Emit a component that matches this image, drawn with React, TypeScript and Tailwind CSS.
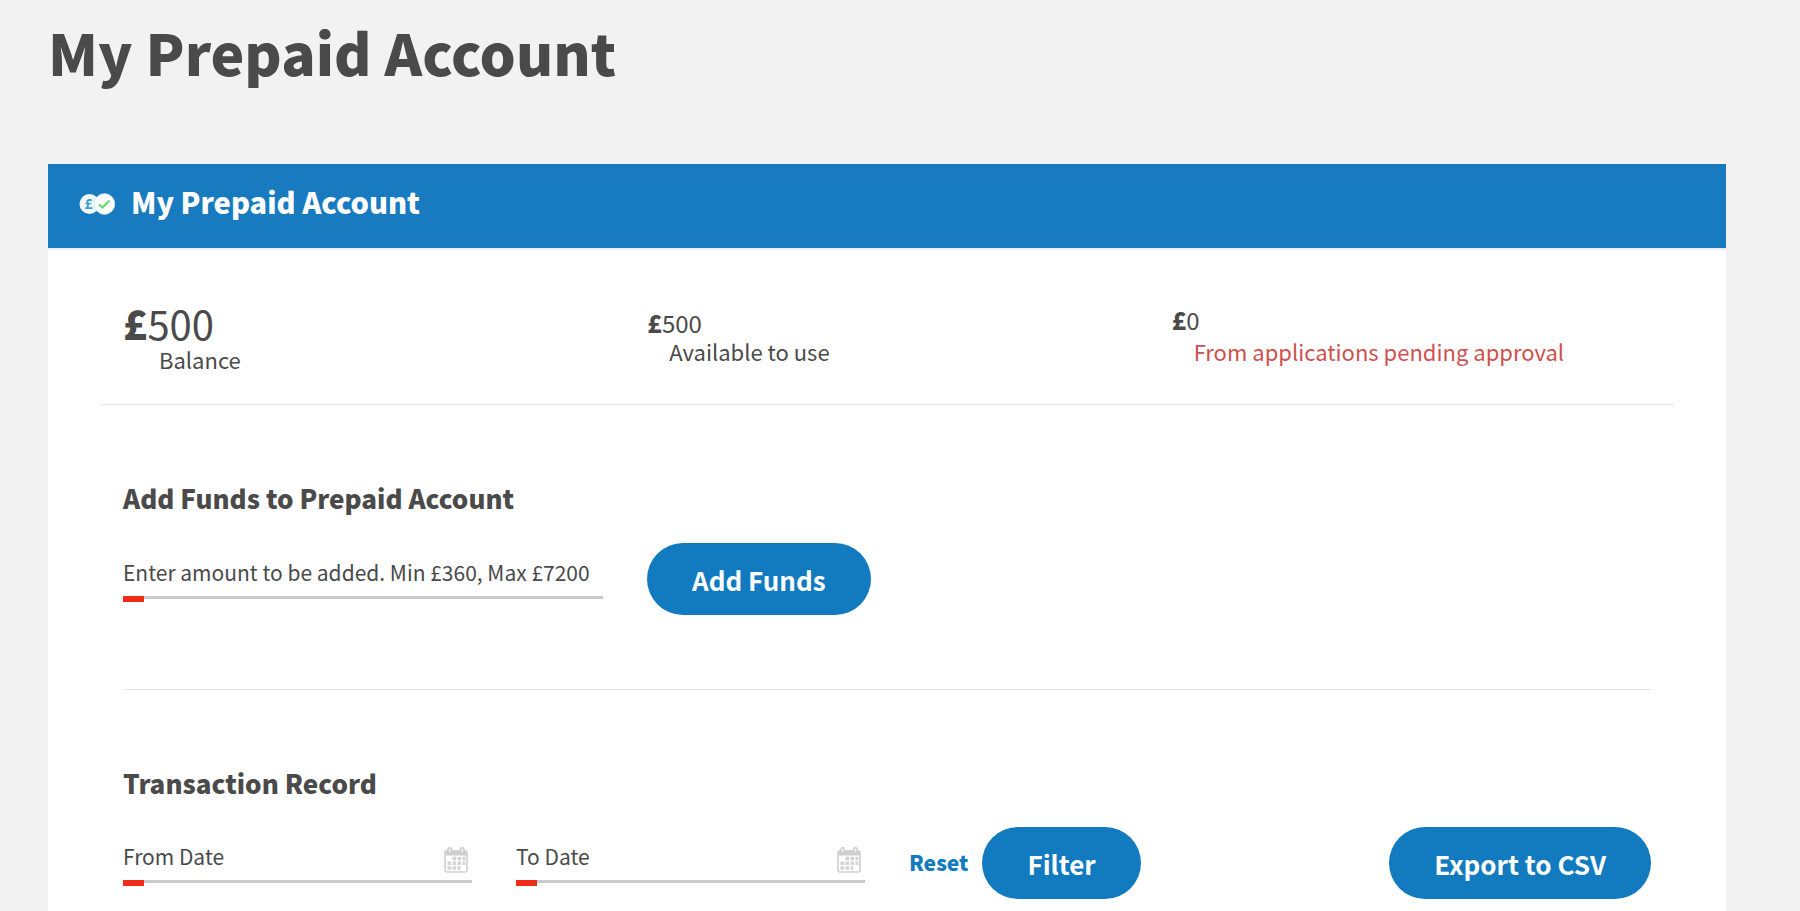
import React, { useState } from "react";

type PillButtonProps = {
  label: string;
  type?: "button" | "submit";
  onClick?: () => void;
};

type LineInputProps = {
  id: string;
  label: string;
  value: string;
  setValue: (val: string) => void;
  icon?: React.ReactNode;
};

const PillButton = ({ label, type = "button", onClick }: PillButtonProps) => (
  <button
    type={type}
    onClick={onClick}
    className="h-[72px] shrink-0 cursor-pointer rounded-full bg-[#127bc0] px-[45px] text-[26px] font-bold whitespace-nowrap text-white hover:bg-[#0f6aa6]"
  >
    {label}
  </button>
);

const LineInput = ({ id, label, value, setValue, icon }: LineInputProps) => (
  <div className="relative h-14 border-b-3 border-[#cbcbcb]">
    <input
      id={id}
      type="text"
      value={value}
      onChange={(e) => setValue(e.target.value)}
      className="h-full w-full bg-transparent text-[21px] outline-none"
    />
    {/* label sits over the field until something is typed */}
    {!value && (
      <label
        htmlFor={id}
        className="absolute inset-x-0 top-[13px] cursor-text text-[21px] leading-8 whitespace-nowrap"
      >
        {label}
      </label>
    )}
    {icon}
    {/* red tab at the start of the underline */}
    <span className="absolute top-full left-0 h-1.5 w-[21px] bg-[#f02b18]" />
  </div>
);

const CalendarIcon = () => (
  <svg
    className="pointer-events-none absolute right-1 bottom-[7px] h-[26px] w-6"
    viewBox="0 0 24 26"
    fill="none"
  >
    <rect x="1" y="4" width="22" height="21" rx="2" stroke="#cfcfcf" strokeWidth="1.6" />
    <path d="M1 3.5h22v5H1z" fill="#cfcfcf" />
    <rect x="4" y="0.8" width="3.4" height="5" rx="1.2" fill="#eee" stroke="#cfcfcf" strokeWidth="1.4" />
    <rect x="16.6" y="0.8" width="3.4" height="5" rx="1.2" fill="#eee" stroke="#cfcfcf" strokeWidth="1.4" />
    <path
      d="M8.5 11.5h13M3.5 16.2h18M3.5 21h13"
      stroke="#d3d3d3"
      strokeWidth="3.4"
      strokeDasharray="3.6 1.4"
    />
  </svg>
);

const CoinsIcon = () => (
  <svg className="h-6 w-9 shrink-0" viewBox="0 0 36 24">
    <circle cx="10.5" cy="12" r="10" fill="#f0f8fc" />
    <text x="5.5" y="17" fontSize="14" fontWeight="700" fill="#3a9cc8">
      £
    </text>
    <circle cx="25.5" cy="12" r="10.4" fill="#fff" stroke="#c4e0f0" strokeWidth="0.6" />
    <path d="M20 12.5l3.5 3 7-7" fill="none" stroke="#5fe06a" strokeWidth="2.2" />
  </svg>
);

const App = () => {
  const [amount, setAmount] = useState<string>("");
  const [fromDate, setFromDate] = useState<string>("");
  const [toDate, setToDate] = useState<string>("");

  const handleReset = () => {
    setFromDate("");
    setToDate("");
  };

  return (
    <div className="min-h-screen bg-[#f2f2f2] pt-[15px] pr-[74px] pl-12 font-['Noto_Sans_CJK_SC',sans-serif] text-[#4a4a4a]">
      <h1 className="mb-[77px] text-[57px] leading-[72px] font-black">
        My Prepaid Account
      </h1>

      <main className="min-h-[747px] bg-white">
        <header className="flex h-[86px] items-center gap-4 border-b-2 border-[#eeeeee] bg-[#197bbf] pb-1 pl-[31px] text-white">
          <CoinsIcon />
          <h2 className="pb-1 text-[29px] font-black">My Prepaid Account</h2>
        </header>

        <section className="mr-[52px] ml-[53px] grid grid-cols-3 border-b border-[#e3e3e3] pt-13 pb-[30px] text-[22px] leading-7">
          <div className="px-[22px]">
            <p className="text-[40px] leading-[42px]">
              <b className="font-black">£</b>500
            </p>
            <p className="pl-9 leading-[30px]">Balance</p>
          </div>
          <div className="px-[22px] pt-[7px]">
            <p className="text-[24px]">
              <b className="font-black">£</b>500
            </p>
            <p className="pl-[22px]">Available to use</p>
          </div>
          <div className="px-[22px] pt-1">
            <p className="text-[24px]">
              <b className="font-black">£</b>0
            </p>
            <p className="mt-[3px] pl-[22px] text-[#d0504e]">
              From applications pending approval
            </p>
          </div>
        </section>

        <section className="mx-[75px] border-b border-[#e6e6e6] pt-[75px] pb-[74px]">
          <h3 className="mb-[27px] text-[26px] leading-9 font-black">
            Add Funds to Prepaid Account
          </h3>
          <form
            className="-mx-[22px] grid grid-cols-3"
            onSubmit={(e) => e.preventDefault()}
          >
            <div className="px-[22px]">
              <LineInput
                id="amount"
                label="Enter amount to be added. Min £360, Max £7200"
                value={amount}
                setValue={setAmount}
              />
            </div>
            <div className="px-[22px]">
              <PillButton label="Add Funds" type="submit" />
            </div>
          </form>
        </section>

        <section className="mx-[75px] pt-[75px]">
          <h3 className="mb-[26px] text-[26px] leading-9 font-black">
            Transaction Record
          </h3>
          <form
            className="-mx-[22px] grid grid-cols-4"
            onSubmit={(e) => e.preventDefault()}
          >
            <div className="px-[22px]">
              <LineInput
                id="fromDate"
                label="From Date"
                value={fromDate}
                setValue={setFromDate}
                icon={<CalendarIcon />}
              />
            </div>
            <div className="px-[22px]">
              <LineInput
                id="toDate"
                label="To Date"
                value={toDate}
                setValue={setToDate}
                icon={<CalendarIcon />}
              />
            </div>
            <div className="flex items-center gap-3.5 pl-[22px]">
              <button
                type="button"
                onClick={handleReset}
                className="cursor-pointer text-[21px] font-black text-[#127bc0]"
              >
                Reset
              </button>
              <PillButton label="Filter" type="submit" />
            </div>
            <div className="flex justify-end px-[22px]">
              <PillButton label="Export to CSV" />
            </div>
          </form>
        </section>
      </main>
    </div>
  );
};

export default App;
